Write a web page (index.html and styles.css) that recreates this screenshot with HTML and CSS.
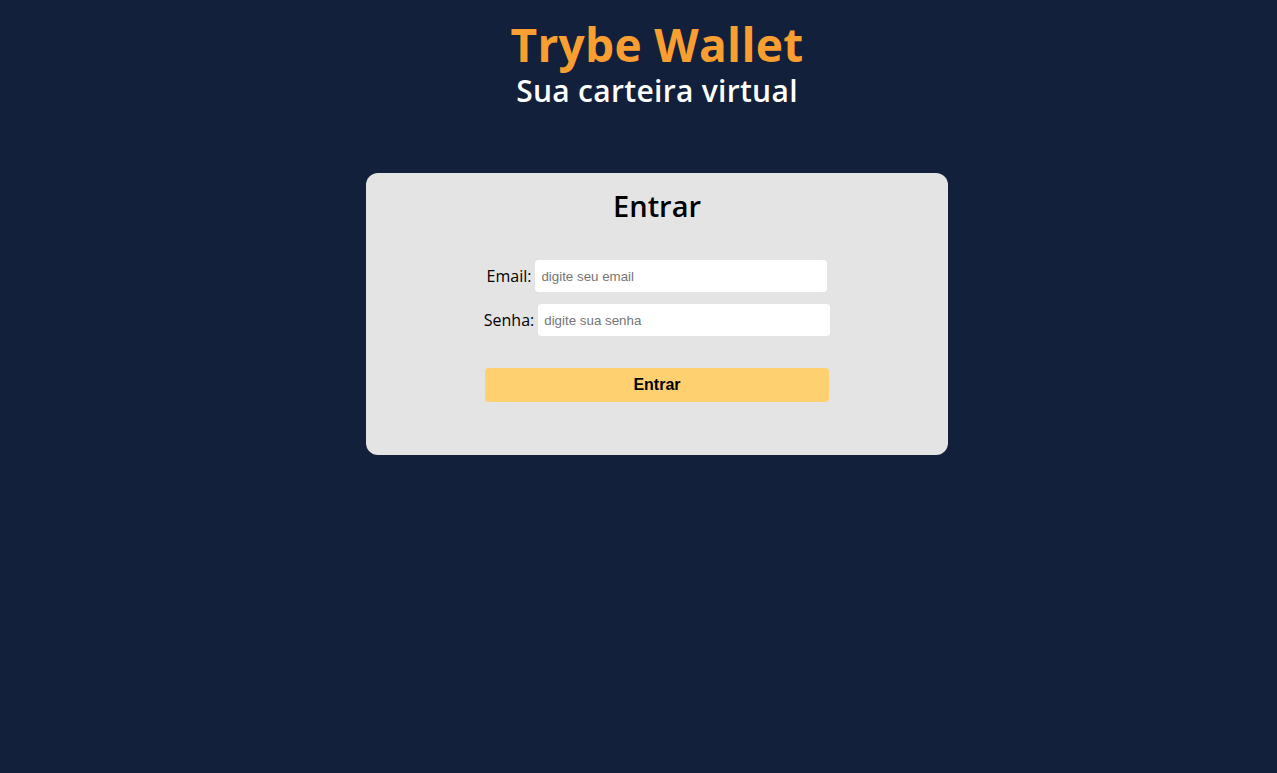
FILE: index.html
```html
<!DOCTYPE html>
<html lang="pt-BR">
<head>
<meta charset="utf-8">
<title>Trybe Wallet</title>
<link rel="stylesheet" href="styles.css">
</head>
<body>
<div class="page">
  <header class="brand">
    <h1 class="brand-title">Trybe Wallet</h1>
    <h2 class="brand-sub">Sua carteira virtual</h2>
  </header>
  <main class="card">
    <h3 class="card-title">Entrar</h3>
    <form class="login-form">
      <div class="row">
        <label class="label" for="email">Email:</label>
        <input class="field" id="email" type="email" placeholder="digite seu email">
      </div>
      <div class="row">
        <label class="label" for="senha">Senha:</label>
        <input class="field" id="senha" type="password" placeholder="digite sua senha">
      </div>
      <button class="submit" type="button">Entrar</button>
    </form>
  </main>
</div>
</body>
</html>
```
FILE: styles.css
```css
html, body {
  margin: 0;
  padding: 0;
  background: #13203b;
  height: 100%;
}
body {
  font-family: "Open Sans", "Noto Sans", sans-serif;
}
.page {
  padding-left: 37px;
  display: flex;
  flex-direction: column;
  align-items: center;
}
.brand {
  display: flex;
  flex-direction: column;
  align-items: center;
  padding-top: 19px;
}
.brand-title {
  margin: 0;
  color: #f99f31;
  font-size: 46px;
  font-weight: 700;
  line-height: 50px;
  letter-spacing: 0.3px;
}
.brand-sub {
  margin: 3px 0 0;
  color: #ffffff;
  font-size: 30px;
  font-weight: 600;
  line-height: 38px;
  letter-spacing: 0.3px;
}
.card {
  margin-top: 63px;
  width: 582px;
  height: 282px;
  box-sizing: border-box;
  background: #e4e4e4;
  border-radius: 12px;
  display: flex;
  flex-direction: column;
  align-items: center;
  padding-top: 13px;
}
.card-title {
  margin: 0;
  font-size: 29px;
  font-weight: 600;
  line-height: 40px;
  color: #000;
}
.login-form {
  margin-top: 34px;
  display: flex;
  flex-direction: column;
  align-items: center;
}
.row {
  display: flex;
  align-items: center;
  gap: 4px;
  margin-bottom: 12px;
}
.label {
  font-size: 16px;
  color: #000;
}
.field {
  width: 292px;
  height: 32px;
  box-sizing: border-box;
  border: none;
  border-radius: 4px;
  background: #fff;
  padding: 0 6px;
  font-family: "Liberation Sans", Arial, sans-serif;
  font-size: 13.333px;
  outline: none;
}
.field::placeholder {
  color: #757575;
}
.submit {
  margin-top: 20px;
  width: 344px;
  height: 34px;
  border: none;
  border-radius: 4px;
  background: #ffd070;
  font-family: "Liberation Sans", Arial, sans-serif;
  font-size: 16px;
  font-weight: 700;
  color: #000;
}
```
